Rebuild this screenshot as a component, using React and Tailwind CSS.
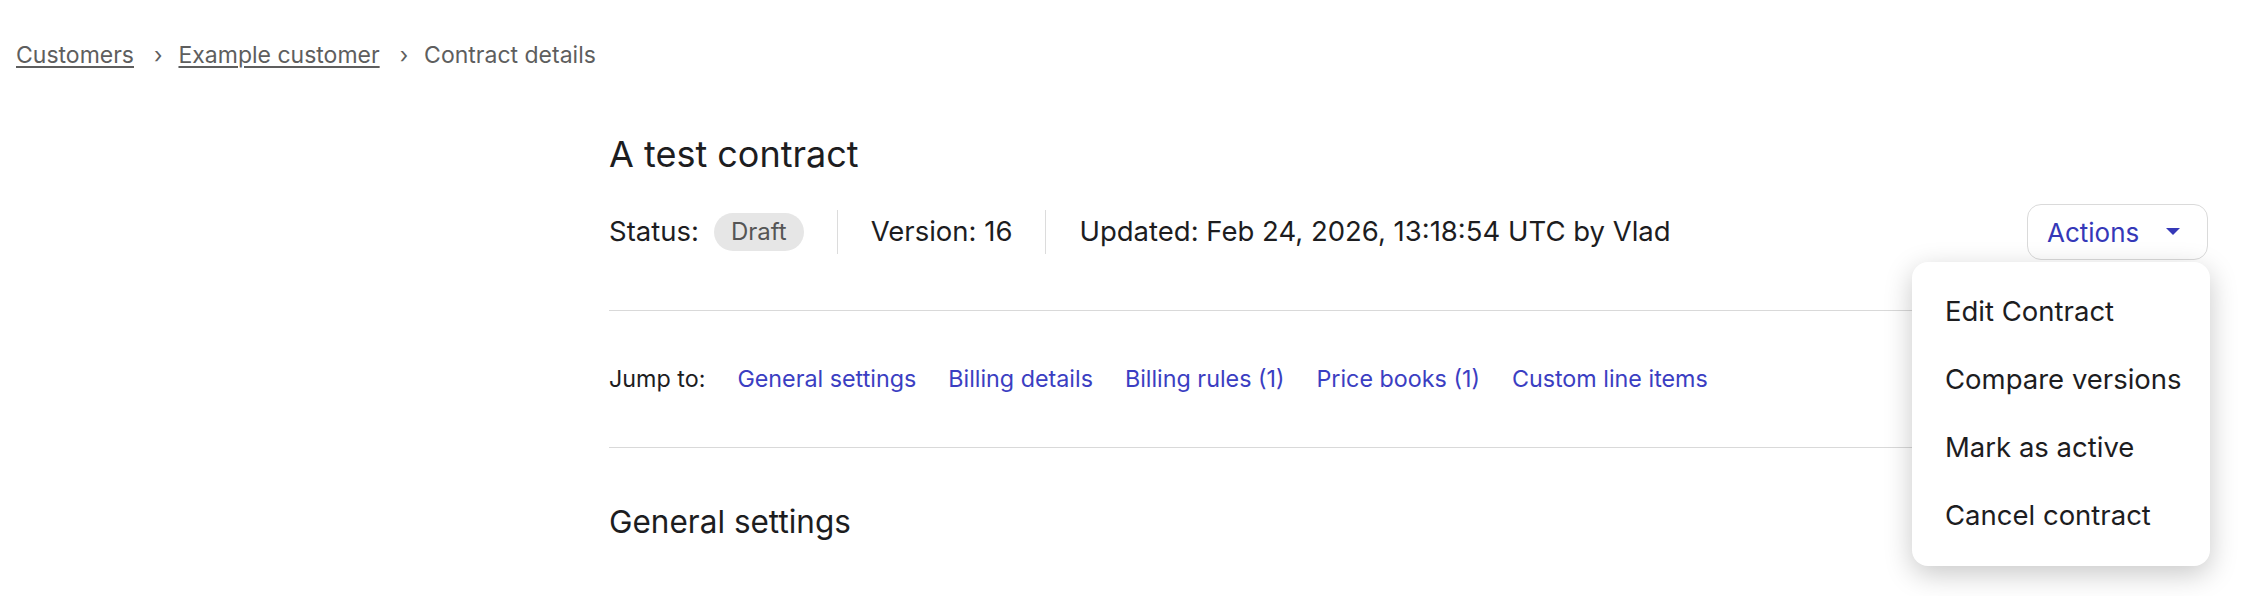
import React from "react";

export default function App() {
  const links = [
    "General settings",
    "Billing details",
    "Billing rules (1)",
    "Price books (1)",
    "Custom line items",
  ];
  const menu = ["Edit Contract", "Compare versions", "Mark as active", "Cancel contract"];
  return (
    <div
      className="w-full h-[596px] overflow-hidden bg-white text-[#1d1d1f]"
      style={{ fontFamily: "Inter, 'Noto Sans', sans-serif" }}
    >
      <nav className="pl-4 pt-[39px] h-[71px] flex items-center text-[23px] leading-[32px] text-[#5e5e5e]">
        <a className="underline underline-offset-[3px] decoration-[1.5px]">Customers</a>
        <span className="ml-[20px] mr-[16px] text-[22px]">›</span>
        <a className="underline underline-offset-[3px] decoration-[1.5px]">Example customer</a>
        <span className="ml-[20px] mr-[16px] text-[22px]">›</span>
        <span>Contract details</span>
      </nav>

      <main className="pl-[609px] pr-[44px]">
        <h1 className="mt-[61px] text-[36px] leading-[44px] font-normal">A test contract</h1>

        <div className="mt-[28px] h-[56px] flex items-center justify-between">
          <div className="flex items-center text-[27.5px]">
            <span>Status:</span>
            <span className="ml-[15px] h-[38px] px-[17px] flex items-center rounded-full bg-[#e6e6e6] text-[#555555] text-[24px]">
              Draft
            </span>
            <span className="mx-[33px] w-px h-[44px] bg-[#dcdcdc]" />
            <span>Version: 16</span>
            <span className="mx-[33px] w-px h-[44px] bg-[#dcdcdc]" />
            <span>Updated: Feb 24, 2026, 13:18:54 UTC by Vlad</span>
          </div>
          <div className="relative">
            <button className="w-[181px] h-[56px] rounded-[14px] border-[1.5px] border-[#dadada] bg-white flex items-center pl-[19px] text-[26px] text-[#3538b8]">
              <span>Actions</span>
              <svg className="ml-[27px]" width="14" height="8" viewBox="0 0 14 8">
                <path d="M0 0 L14 0 L7 7 Z" fill="#3538b8" />
              </svg>
            </button>
            <div className="absolute right-[-2px] top-[58px] w-[298px] py-4 rounded-[16px] bg-white shadow-[0_8px_28px_rgba(0,0,0,0.22)] z-10">
              {menu.map((m) => (
                <div key={m} className="h-[68px] flex items-center pl-[33px] text-[27.5px] text-[#1d1d1f]">
                  {m}
                </div>
              ))}
            </div>
          </div>
        </div>

        <div className="mt-[50px] h-px bg-[#d9d9d9]" />

        <div className="h-[136px] flex items-center text-[23.3px]">
          <span className="mr-[32px]">Jump to:</span>
          <div className="flex items-center gap-[32px] text-[#3b3ec2]">
            {links.map((l) => (
              <a key={l}>{l}</a>
            ))}
          </div>
        </div>

        <div className="h-px bg-[#d9d9d9]" />

        <h2 className="mt-[54px] text-[31.5px] leading-[40px] font-normal">General settings</h2>
      </main>
    </div>
  );
}
